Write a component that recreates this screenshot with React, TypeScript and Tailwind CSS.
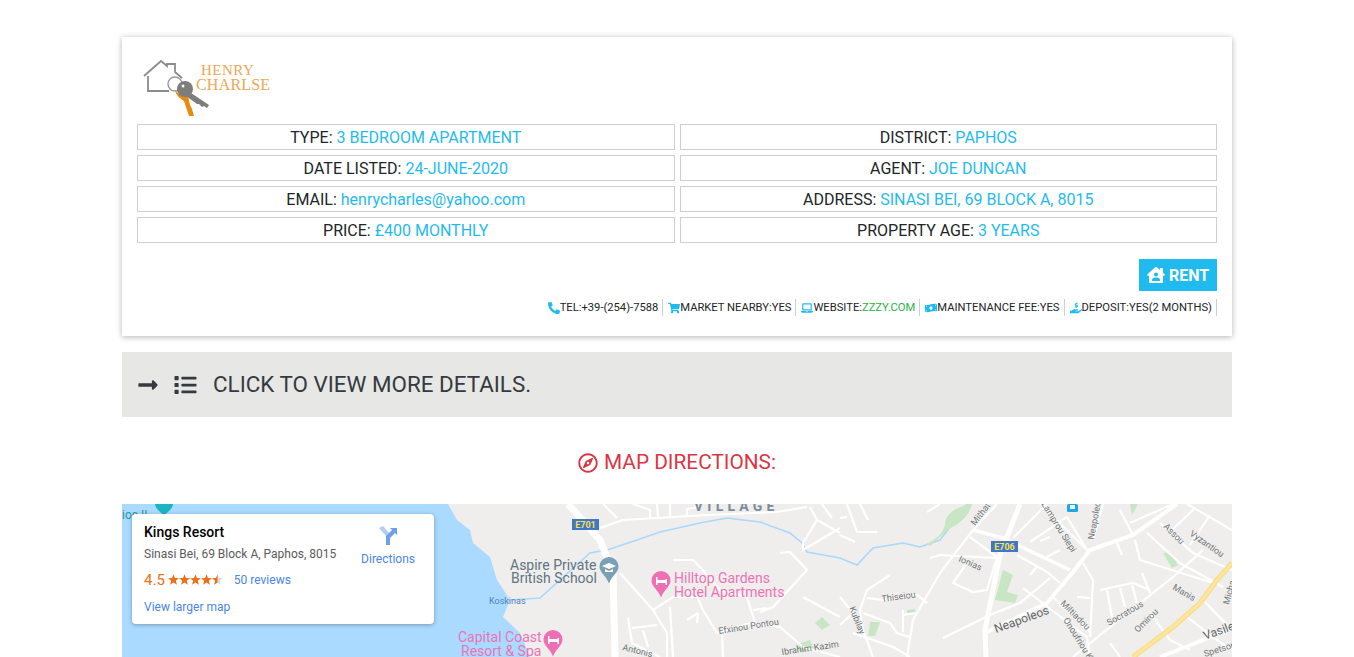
import {
  FaPhoneAlt,
  FaShoppingCart,
  FaLaptop,
  FaMoneyBillWave,
  FaHandHoldingUsd,
  FaHouseUser,
  FaLongArrowAltRight,
  FaList,
  FaRegCompass,
} from "react-icons/fa";
import type { IconType } from "react-icons";

const DETAILS = [
  ["TYPE", "3 BEDROOM APARTMENT"],
  ["DISTRICT", "PAPHOS"],
  ["DATE LISTED", "24-JUNE-2020"],
  ["AGENT", "JOE DUNCAN"],
  ["EMAIL", "henrycharles@yahoo.com"],
  ["ADDRESS", "SINASI BEI, 69 BLOCK A, 8015"],
  ["PRICE", "£400 MONTHLY"],
  ["PROPERTY AGE", "3 YEARS"],
];

const FEATURES: { icon: IconType; label: string; value: string; green?: boolean }[] = [
  { icon: FaPhoneAlt, label: "TEL:", value: "+39-(254)-7588" },
  { icon: FaShoppingCart, label: "MARKET NEARBY:", value: "YES" },
  { icon: FaLaptop, label: "WEBSITE:", value: "ZZZY.COM", green: true },
  { icon: FaMoneyBillWave, label: "MAINTENANCE FEE:", value: "YES" },
  { icon: FaHandHoldingUsd, label: "DEPOSIT:", value: "YES(2 MONTHS)" },
];

// map strokes, in page coordinates
const SMALL_ROADS = [
  "M600 528L623 520L707 515L777 512L807 507",
  "M603 504L617 518",
  "M633 504L650 510L650 518",
  "M657 504L658 517",
  "M670 504L670 517",
  "M687 516L687 509L700 507",
  "M620 573L653 610L667 633L667 657",
  "M653 610L673 597L697 597L703 610L717 633",
  "M673 560L693 560L703 570L720 590L747 597L755 623",
  "M670 607L673 657",
  "M687 620L698 613M698 613L697 623",
  "M628 618L632 643L660 657",
  "M632 628L657 625",
  "M643 630L648 647",
  "M717 633L750 623L780 627L803 647L840 657",
  "M722 633L723 657",
  "M753 610L767 608",
  "M780 553L790 552L807 570L773 607L760 612",
  "M803 597L840 617",
  "M817 520L803 543L803 550L840 528",
  "M810 507L817 520L840 533",
  "M822 504L832 518",
  "M847 504L857 532L877 532",
  "M860 504L868 520",
  "M840 535L855 542",
  "M840 518L847 517",
  "M927 512L940 504",
  "M890 575L867 590L860 610L863 630L873 657",
  "M867 598L883 600L917 595L927 603",
  "M840 597L853 613L840 625",
  "M863 613L890 623L897 633L910 637",
  "M853 633L893 647L910 657",
  "M903 610L903 632M903 615L915 613",
  "M907 657L913 620L940 573L973 530L997 504",
  "M970 537L997 557L987 590L973 592L953 583L967 563",
  "M930 558L940 555L997 558",
  "M1017 555L1047 572L1060 583",
  "M1030 575L1037 567",
  "M1050 578L1020 603L990 615L943 638",
  "M1023 588L1087 637L1090 657",
  "M1053 597L1090 632",
  "M1083 563L1093 580L1090 637",
  "M1077 597L1090 598",
  "M1013 538L1047 504",
  "M1030 542L1067 517",
  "M1040 541L1050 537",
  "M1047 557L1060 550",
  "M1067 517L1087 550",
  "M1040 504L1087 550",
  "M1093 540L1103 504",
  "M1120 510L1133 535",
  "M1130 523L1173 504",
  "M1117 543L1122 555",
  "M1135 540L1140 560L1213 583",
  "M1147 533L1180 563L1223 587",
  "M1160 523L1193 553L1232 570",
  "M1187 504L1232 530",
  "M1195 508L1172 530",
  "M1210 515L1190 545",
  "M1203 550L1173 577L1110 627L1073 657",
  "M1100 590L1133 583L1150 590",
  "M1107 590L1112 617",
  "M1120 588L1125 607",
  "M1132 585L1137 603",
  "M1142 573L1150 593",
  "M1150 613L1170 640L1190 650",
  "M1187 617L1217 640L1232 650",
  "M1203 600L1232 630",
  "M1110 643L1120 657",
];

function starPoints(cx: number, r: number) {
  const pts: string[] = [];
  for (let i = 0; i < 10; i++) {
    const a = -Math.PI / 2 + (i * Math.PI) / 5;
    const d = i % 2 === 0 ? r : r * 0.42;
    pts.push(`${(cx + d * Math.cos(a)).toFixed(2)},${(6 + d * Math.sin(a)).toFixed(2)}`);
  }
  return pts.join(" ");
}

function Stars() {
  return (
    <svg viewBox="0 0 55 12" className="ml-[3px] h-3 w-[55px]">
      {[0, 1, 2, 3].map((i) => (
        <polygon key={i} points={starPoints(5.5 + i * 11, 5.8)} fill="#e7711b" />
      ))}
      <polygon points={starPoints(49.5, 5.8)} fill="#dadada" />
      <polygon points={starPoints(49.5, 5.8)} fill="#e7711b" clipPath="inset(0 50% 0 0)" />
    </svg>
  );
}

function MapCanvas() {
  return (
    <svg viewBox="122 504 1110 153" className="block h-[153px] w-full">
      <rect x="122" y="504" width="1110" height="153" fill="#efeeec" />
      <path
        d="M122 504L448 504L457 520L470 530L473 543L490 557L497 580L510 600L503 617L520 633L530 657L122 657Z"
        fill="#aadaff"
      />
      <path
        d="M510 600L540 598L590 553L607 550L637 540L660 532L700 523L727 518L760 522L790 533L802 543L807 552L840 558L857 565L873 548L903 543L920 547L940 540L953 523L967 504"
        fill="none"
        stroke="#a8d8fb"
        strokeWidth="1.6"
      />
      <path d="M945 525C945 512 958 508 968 504L972 504C968 520 955 525 948 530L930 546L926 544C935 540 942 535 945 525Z" fill="#c8e6c4" />
      <path d="M1003 570L1013 575L1007 592L1018 595L1015 603L995 600Z" fill="#c8e6c4" />
      <path d="M1163 553L1170 552L1178 565L1172 568Z" fill="#c8e6c4" />
      <path d="M907 610L915 609L915 614L907 614Z" fill="#c8e6c4" />
      <path d="M870 622L880 622L875 636L868 636Z" fill="#c8e6c4" />
      <path d="M815 623L822 617L830 625L822 630Z" fill="#c8e6c4" />
      <path d="M795 645L810 640L815 650L800 652Z" fill="#c8e6c4" />
      <path d="M1130 504L1138 504L1132 515Z" fill="#c8e6c4" />
      {SMALL_ROADS.map((d) => (
        <path key={d} d={d} fill="none" stroke="#fff" strokeWidth="2.2" />
      ))}
      <path d="M568 504L600 540L613 573L615 657" fill="none" stroke="#fff" strokeWidth="7" />
      <path d="M1020 504L1000 555L985 630L986 657" fill="none" stroke="#fff" strokeWidth="5" />
      <path d="M973 530L1003 538L1070 570" fill="none" stroke="#fff" strokeWidth="3.5" />
      <path
        d="M987 632L1047 603L1073 572L1090 550L1133 535L1177 504"
        fill="none"
        stroke="#fff"
        strokeWidth="4"
      />
      <path d="M1160 657L1203 640L1232 628" fill="none" stroke="#fff" strokeWidth="4" />
      <path
        d="M1133 657L1173 627L1200 603L1217 580L1232 563"
        fill="none"
        stroke="#f5d77e"
        strokeWidth="5"
      />
      <path
        d="M1133 657L1173 627L1200 603L1217 580L1232 563"
        fill="none"
        stroke="#fde69a"
        strokeWidth="3.5"
      />

      <rect x="572" y="519" width="27" height="11" fill="#3f78c5" />
      <text x="585.5" y="528" textAnchor="middle" fontSize="9" fontWeight="700" fill="#fde047" fontFamily="Roboto, sans-serif">E701</text>
      <rect x="991" y="541" width="27" height="11" fill="#3f78c5" />
      <text x="1004.5" y="550" textAnchor="middle" fontSize="9" fontWeight="700" fill="#fde047" fontFamily="Roboto, sans-serif">E706</text>

      <g fontFamily="Roboto, sans-serif">
        <text x="694" y="511" fontSize="14" fontWeight="700" letterSpacing="4.2" fill="#7b8ba0">VILLAGE</text>
        <text x="510" y="570" fontSize="14" fill="#5f7581">Aspire Private</text>
        <text x="511" y="583" fontSize="14" fill="#5f7581">British School</text>
        <text x="674" y="583" fontSize="14" fill="#ec74b6">Hilltop Gardens</text>
        <text x="674" y="597" fontSize="14" fill="#ec74b6">Hotel Apartments</text>
        <text x="458" y="642" fontSize="14" fill="#ec74b6">Capital Coast</text>
        <text x="461" y="656" fontSize="14" fill="#ec74b6">Resort &amp; Spa</text>
        <text x="489" y="604" fontSize="9" fill="#4f83c4">Koskinas</text>
        <g fontSize="9" fill="#6f7679">
          <text transform="translate(719 634) rotate(-9)">Efxinou Pontou</text>
          <text transform="translate(622 650) rotate(14)">Antonis</text>
          <text transform="translate(782 655) rotate(-8)">Ibrahim Kazim</text>
          <text transform="translate(958 561) rotate(24)">Ionias</text>
          <text transform="translate(882 602) rotate(-8)">Thiseiou</text>
          <text transform="translate(849 608) rotate(68)">Kubilay</text>
          <text transform="translate(975 526) rotate(-52)">Mithat</text>
          <text transform="translate(1041 504) rotate(58)">Lamprou Siepi</text>
          <text transform="translate(1094 540) rotate(-80)">Neapoleos</text>
          <text transform="translate(1163 527) rotate(45)">Assou</text>
          <text transform="translate(1189 535) rotate(35)">Vyzantiou</text>
          <text transform="translate(1172 589) rotate(30)">Manis</text>
          <text transform="translate(1060 604) rotate(45)">Miltiadou</text>
          <text transform="translate(1063 620) rotate(58)">Onoufriou K</text>
          <text transform="translate(1109 626) rotate(-30)">Socratous</text>
          <text transform="translate(1138 633) rotate(-45)">Omirou</text>
          <text transform="translate(1205 657) rotate(-18)">Spetson</text>
          <text transform="translate(1229 605) rotate(-75)">Micha</text>
        </g>
        <text transform="translate(996 633) rotate(-20)" fontSize="12" fill="#5f6668">Neapoleos</text>
        <text transform="translate(1205 640) rotate(-20)" fontSize="12" fill="#5f6668">Vasile</text>
      </g>

      {/* pins */}
      <path d="M609 557a9.500 9.500 0 0 1 9.500 9.500c0 6-6.500 9-9.500 17c-3-8-9.500-11-9.500-17a9.500 9.500 0 0 1 9.500-9.500Z" fill="#7ba0b5" />
      <path d="M602 566l7-3l7 3l-7 3ZM605 569v3h8v-3l-4 2Z" fill="#fff" />
      <path d="M661 571a9.500 9.500 0 0 1 9.500 9.500c0 6-6.500 9-9.500 17c-3-8-9.500-11-9.500-17a9.500 9.500 0 0 1 9.500-9.500Z" fill="#ee6fb4" />
      <path d="M656 577h1.500v3h8v-1h1.500v6h-1.500v-2h-8v2H656Z" fill="#fff" />
      <path d="M553 630a9.500 9.500 0 0 1 9.500 9.500c0 6-6.500 9-9.500 17c-3-8-9.500-11-9.500-17a9.500 9.500 0 0 1 9.500-9.500Z" fill="#ee6fb4" />
      <path d="M548 636h1.500v3h8v-1h1.500v6h-1.500v-2h-8v2H548Z" fill="#fff" />
      <path d="M155 504h18c0 4-5 8-9 11c-4-3-9-7-9-11Z" fill="#1ab5c1" />
      <rect x="1067" y="504" width="11" height="8" rx="1.500" fill="#1aa7f0" />
      <rect x="1070" y="505" width="5" height="4" fill="#fff" />
      <text x="122" y="519" fontSize="12" fill="#2a9aa3" fontFamily="Roboto, sans-serif">ios II</text>
    </svg>
  );
}

function Logo() {
  return (
    <svg viewBox="137 52 140 72" className="block h-[72px] w-[140px]">
      <path
        d="M144 76L161 61L167 66V64H175V72L182 78M148 76V91H169"
        fill="none"
        stroke="#8c8c8c"
        strokeWidth="1.800"
      />
      <circle cx="175" cy="84" r="7" fill="none" stroke="#999" strokeWidth="1.400" />
      <path d="M175 90C176 96 181 99 184 101L189 116L194 116L192 109L190 105L188 96C183 96 178 94 175 90Z" fill="#e98a0c" />
      <circle cx="185" cy="89" r="8" fill="#7d7d7d" />
      <path d="M188 91L209 105L207 108L204 106L202 107L199 104L197 104L186 96Z" fill="#7d7d7d" />
      <circle cx="183" cy="86" r="1.500" fill="#fff" />
      <g fontFamily="'Liberation Serif', serif" fill="#f0a654">
        <text x="201" y="75" fontSize="15" letterSpacing="0.5">HENRY</text>
        <text x="196" y="90" fontSize="16" letterSpacing="0.2">CHARLSE</text>
      </g>
    </svg>
  );
}

export default function App() {
  return (
    <div
      className="h-[657px] overflow-hidden bg-white pt-[37px]"
      style={{ fontFamily: "Roboto, sans-serif" }}
    >
      <div className="mx-auto w-[1110px]">
        <div className="h-[299px] bg-white px-[15px] pt-[15px] shadow-[0_1px_6px_rgba(0,0,0,0.3)]">
          <Logo />
          <div className="grid grid-cols-2 gap-[5px]">
            {DETAILS.map(([label, value]) => (
              <div
                key={label}
                className="flex h-[26px] items-center justify-center border border-[#cfcfcf] pt-[2px] text-base text-[#212529]"
              >
                {label}:&nbsp;<span className="text-[#1fbbee]">{value}</span>
              </div>
            ))}
          </div>
          <div className="mt-4 flex justify-end">
            <button className="flex h-8 w-[78px] items-center justify-center gap-1 bg-[#1fbbee] pt-[2px] text-base font-bold text-white">
              <FaHouseUser className="-mt-[2px] text-lg" />
              RENT
            </button>
          </div>
          <div className="mt-2 flex justify-end">
            {FEATURES.map((f) => (
              <div
                key={f.label}
                className="flex h-[17px] items-center border-r border-[#cfcfcf] pl-[5px] pr-1 text-[11.2px] text-[#212529]"
              >
                <f.icon className="h-3 w-3 text-[#1fbbee]" />
                <span className="pt-[2px]">
                  {f.label}
                  <span className={f.green ? "text-[#28b44a]" : ""}>{f.value}</span>
                </span>
              </div>
            ))}
          </div>
        </div>

        <div className="mt-4 flex h-[65px] items-center bg-[#e7e7e5] px-[15px] text-[22.4px] text-[#343a40]">
          <FaLongArrowAltRight className="mr-[15px] h-[22px] w-[22px]" />
          <FaList className="mr-4 h-[22px] w-[23px]" />
          CLICK TO VIEW MORE DETAILS.
        </div>

        <div className="mt-[34px] flex h-[24px] items-center justify-center gap-[6px] text-[20.8px] text-[#dc3545]">
          <FaRegCompass className="h-5 w-5" />
          MAP DIRECTIONS:
        </div>

        <div className="relative mt-[29px]">
          <MapCanvas />
          <div className="absolute left-[10px] top-[10px] h-[110px] w-[302px] rounded-sm bg-white px-3 pt-[10px] shadow-[0_1px_4px_rgba(0,0,0,0.3)]">
            <div className="flex justify-between">
              <div>
                <div className="text-sm font-medium leading-4 text-black">Kings Resort</div>
                <div className="mt-[6px] text-xs leading-4 text-[#5b5b5b]">Sinasi Bei, 69 Block A, Paphos, 8015</div>
                <div className="mt-[8px] flex items-center text-xs leading-5 text-[#4a86e8]">
                  <span className="text-[15px] text-[#e7711b]">4.5</span>
                  <Stars />
                  <span className="ml-[11px]">50 reviews</span>
                </div>
              </div>
              <div className="mr-[7px] flex flex-col items-center text-xs text-[#4a86e8]">
                <svg viewBox="0 0 20 20" className="mt-[2px] h-5 w-5">
                  <path d="M1 2L5 0L12 8V19H8V10Z" fill="#b4cdf3" />
                  <path d="M8 19V10L14 4L12 2H19V9L17 7L12 12V19Z" fill="#6f9fe8" />
                </svg>
                <span className="mt-[5px]">Directions</span>
              </div>
            </div>
            <div className="mt-[9px] text-xs text-[#4a86e8]">View larger map</div>
          </div>
        </div>
      </div>
    </div>
  );
}
